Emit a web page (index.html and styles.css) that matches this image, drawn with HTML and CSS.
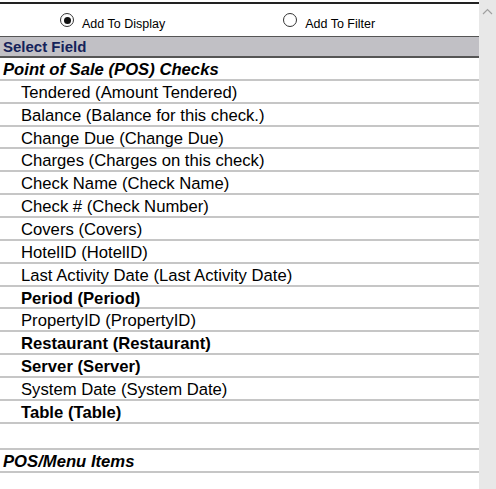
FILE: index.html
```html
<!DOCTYPE html>
<html>
<head>
<meta charset="utf-8">
<link rel="stylesheet" href="styles.css">
</head>
<body>
<div class="frame">
  <div class="main">
    <div class="topline"></div>
    <div class="radios">
      <label class="radio r1"><span class="dot checked"></span><span class="lbl">Add To Display</span></label>
      <label class="radio r2"><span class="dot"></span><span class="lbl">Add To Filter</span></label>
    </div>
    <div class="header">Select Field</div>
    <div class="row group">Point of Sale (POS) Checks</div>
    <div class="row item">Tendered (Amount Tendered)</div>
    <div class="row item">Balance (Balance for this check.)</div>
    <div class="row item">Change Due (Change Due)</div>
    <div class="row item">Charges (Charges on this check)</div>
    <div class="row item">Check Name (Check Name)</div>
    <div class="row item">Check # (Check Number)</div>
    <div class="row item">Covers (Covers)</div>
    <div class="row item">HotelID (HotelID)</div>
    <div class="row item">Last Activity Date (Last Activity Date)</div>
    <div class="row item bold">Period (Period)</div>
    <div class="row item">PropertyID (PropertyID)</div>
    <div class="row item bold">Restaurant (Restaurant)</div>
    <div class="row item bold">Server (Server)</div>
    <div class="row item">System Date (System Date)</div>
    <div class="row item bold">Table (Table)</div>
    <div class="row empty"></div>
    <div class="row group">POS/Menu Items</div>
    <div class="row empty"></div>
  </div>
  <div class="scrollbar">
    <svg class="arrow" width="11" height="7" viewBox="0 0 11 7"><path d="M1 6 L5.5 1.5 L10 6" fill="none" stroke="#a0a0a0" stroke-width="1.2"/></svg>
  </div>
</div>
</body>
</html>
```
FILE: styles.css
```css
html, body {
  margin: 0;
  padding: 0;
  background: #fff;
  overflow: hidden;
}
body {
  font-family: "Liberation Sans", Arial, sans-serif;
  color: #000;
}
.frame {
  display: flex;
  width: 496px;
  height: 489px;
  overflow: hidden;
}
.main {
  width: 479px;
  flex: none;
  padding-top: 2px;
}
.topline {
  height: 2px;
  background: #222;
}
.radios {
  height: 32px;
  display: flex;
  align-items: center;
  font-size: 12.5px;
}
.radio {
  display: flex;
  align-items: center;
  gap: 8px;
}
.lbl {
  position: relative;
  top: 4px;
}
.r1 { margin-left: 60px; }
.r2 { margin-left: 118px; }
.dot {
  width: 14px;
  height: 14px;
  border: 1px solid #333;
  border-radius: 50%;
  box-sizing: border-box;
  position: relative;
  background: #fff;
}
.dot.checked::after {
  content: "";
  position: absolute;
  left: 2.5px;
  top: 2.5px;
  width: 7px;
  height: 7px;
  border-radius: 50%;
  background: #111;
}
.header {
  height: 19px;
  line-height: 19px;
  background: #c1c0c5;
  border-top: 1px solid #555;
  border-bottom: 2px solid #555;
  color: #15235a;
  font-weight: bold;
  font-size: 15px;
  padding-left: 3px;
}
.row {
  height: 16.86px;
  line-height: 16.86px;
  padding-top: 4px;
  border-bottom: 2px solid #c6c6c6;
  font-size: 16.67px;
  white-space: nowrap;
}
.group {
  font-weight: bold;
  font-style: italic;
  padding-left: 3px;
}
.item {
  padding-left: 21px;
}
.bold {
  font-weight: bold;
}
.empty {
  height: 20px;
}
.scrollbar {
  flex: none;
  width: 17px;
  background: #e8e8e8;
  display: flex;
  justify-content: center;
  padding-top: 8px;
  box-sizing: border-box;
}
.arrow {
  display: block;
}
```
